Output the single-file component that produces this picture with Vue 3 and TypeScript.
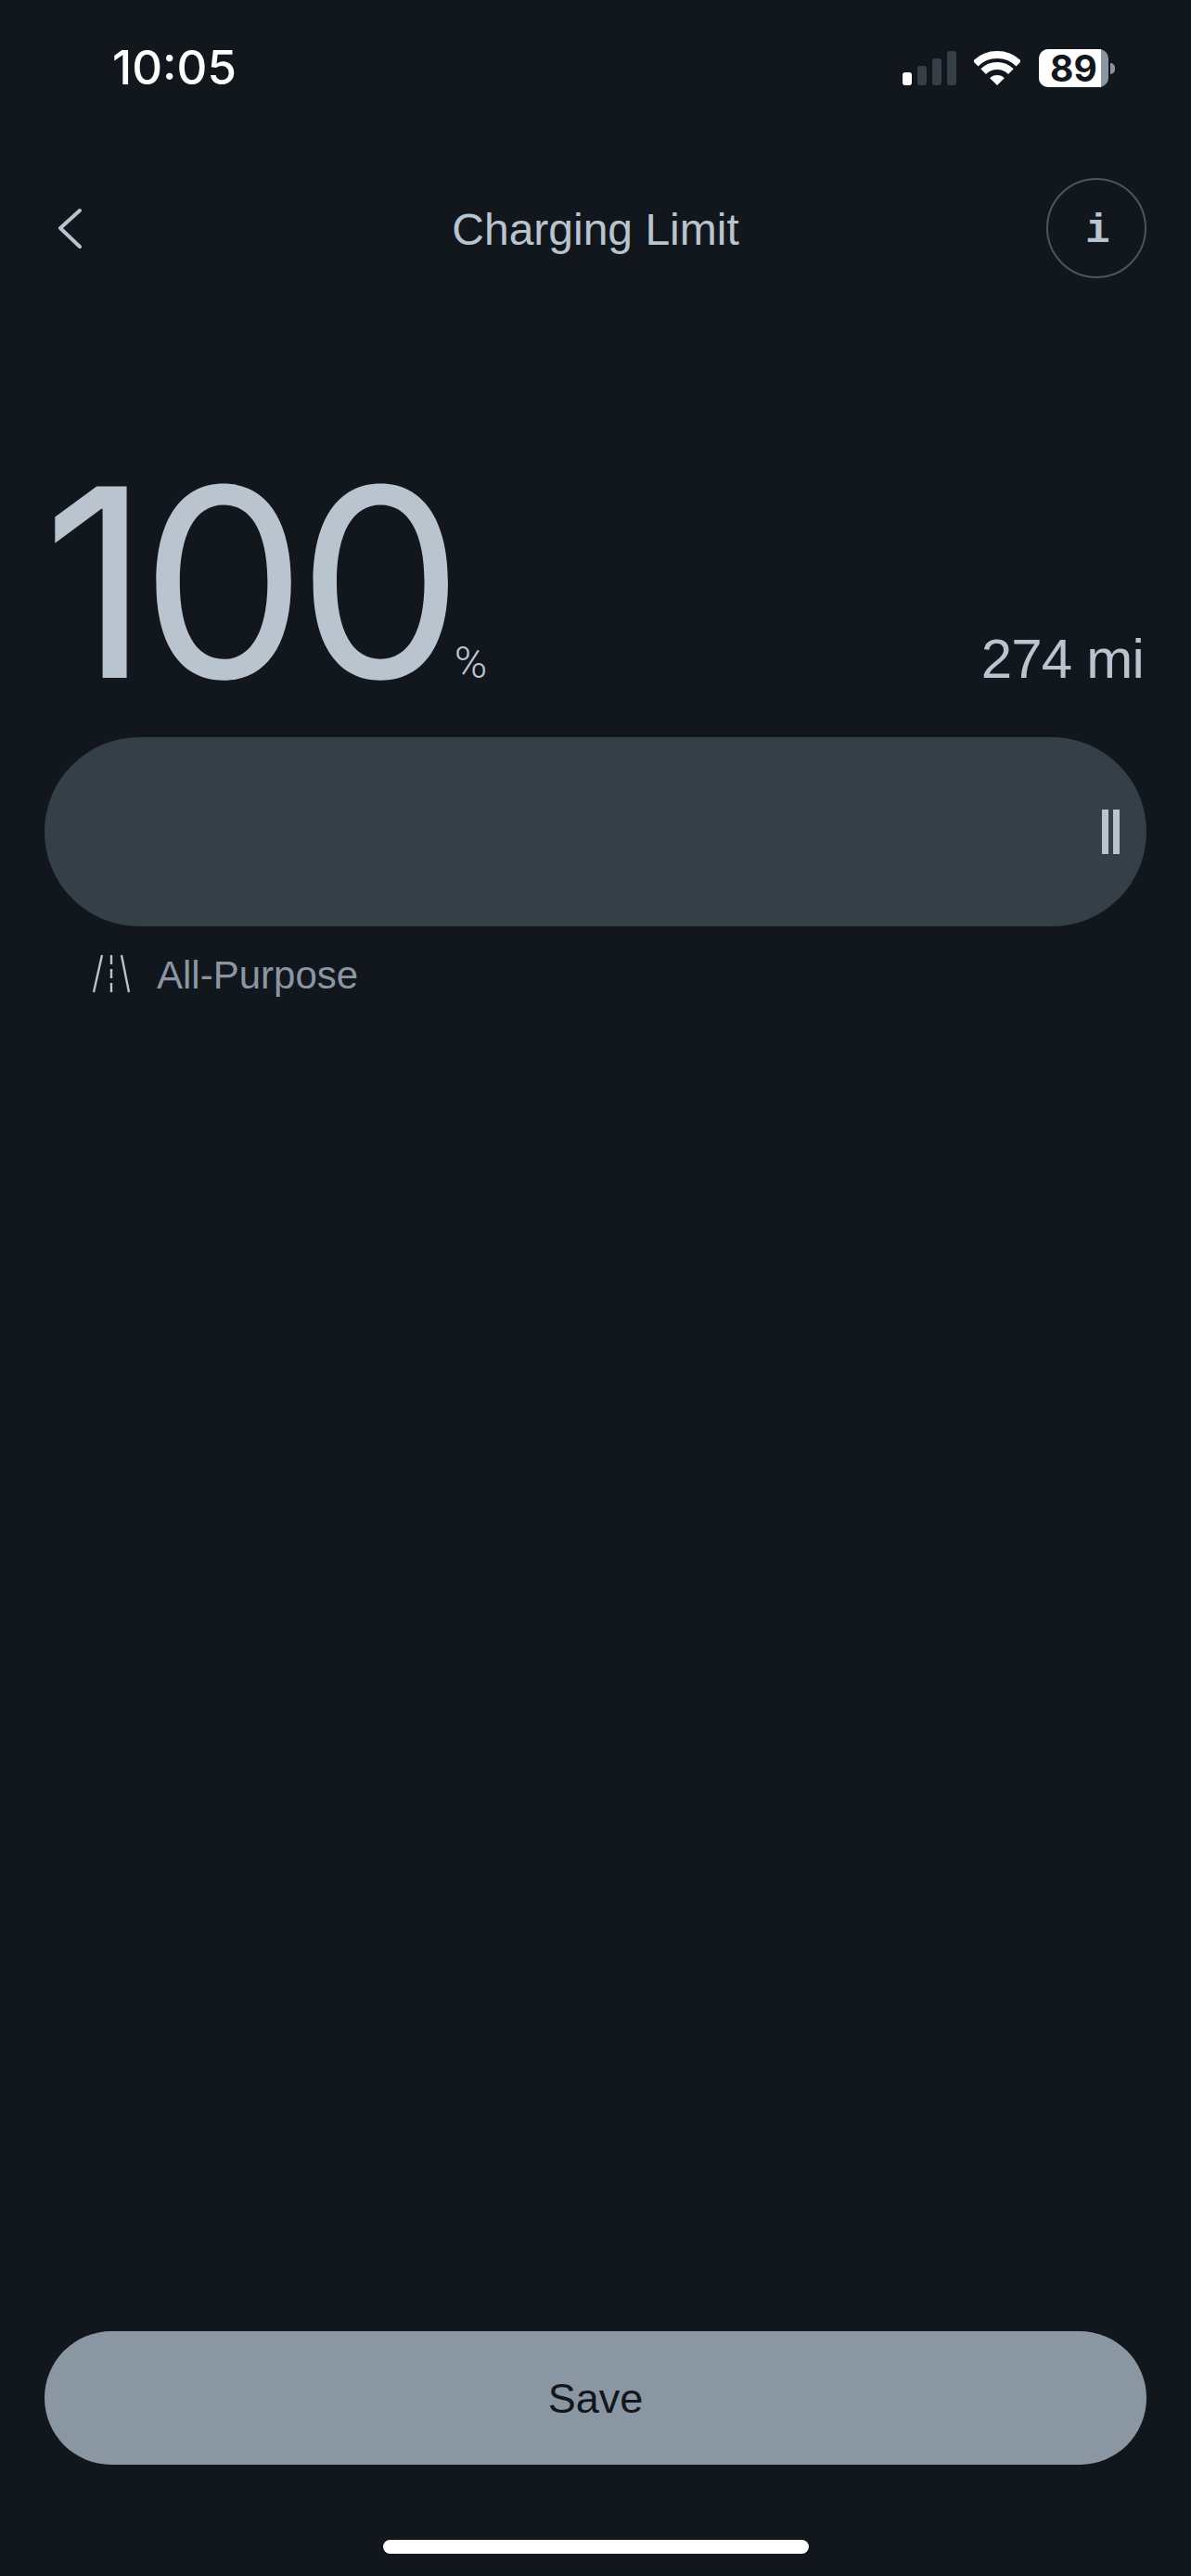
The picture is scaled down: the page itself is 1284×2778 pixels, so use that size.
<script setup lang="ts">
const signalBars = [14, 21, 29, 37];
const activeBars = 1;
const batteryLevel = 89;
</script>

<template>
  <div class="screen">
    <header class="status-bar">
      <span class="time">10:05</span>
      <div class="status-icons">
        <div class="signal">
          <i
            v-for="(h, idx) in signalBars"
            :key="h"
            :class="{ on: idx < activeBars }"
            :style="{ height: h + 'px' }"
          ></i>
        </div>
        <svg class="wifi" width="50" height="37" viewBox="0 0 50 37">
          <path d="M1.7 13.7A33 33 0 0 1 48.3 13.7" fill="none" stroke="#fff" stroke-width="8" />
          <path d="M10.15 22.15A21 21 0 0 1 39.85 22.15" fill="none" stroke="#fff" stroke-width="8" />
          <path d="M25 37L17.2 29.2A11 11 0 0 1 32.8 29.2Z" fill="#fff" />
        </svg>
        <div class="battery">
          <div class="battery-body">
            <div class="battery-fill" :style="{ width: batteryLevel + '%' }"></div>
            <span class="battery-text">{{ batteryLevel }}</span>
          </div>
          <div class="battery-nub"></div>
        </div>
      </div>
    </header>

    <nav class="nav">
      <button class="back" aria-label="Back">
        <svg width="26" height="44" viewBox="0 0 26 44">
          <path d="M24 3L3 22L24 42" fill="none" stroke="#b9c4cf" stroke-width="4" stroke-linecap="round" stroke-linejoin="round" />
        </svg>
      </button>
      <h1 class="title">Charging Limit</h1>
      <button class="info">i</button>
    </nav>

    <section class="readout">
      <div class="percent">
        <span class="percent-value">100</span>
        <span class="percent-sign">%</span>
      </div>
      <span class="range">274 mi</span>
    </section>

    <div class="slider">
      <div class="grip"><i></i><i></i></div>
    </div>

    <div class="mode">
      <svg width="40" height="42" viewBox="0 0 40 42">
        <g fill="none" stroke="#b9c4cf" stroke-width="2.4">
          <path d="M10 1L1 41" />
          <path d="M20 1V11M20 16V26M20 31V41" />
          <path d="M31 1L39 41" />
        </g>
      </svg>
      <span class="mode-label">All-Purpose</span>
    </div>

    <div class="spacer"></div>

    <button class="save">Save</button>
    <div class="home-indicator"></div>
  </div>
</template>

<style>
html,
body {
  margin: 0;
  background: #12171e;
}
</style>

<style scoped>
.screen {
  width: 1284px;
  height: 2778px;
  display: flex;
  flex-direction: column;
  background: #12171e;
  font-family: "Liberation Sans", Arial, sans-serif;
  color: #b9c4cf;
  overflow: hidden;
}

.status-bar {
  height: 144px;
  box-sizing: border-box;
  display: flex;
  justify-content: space-between;
  align-items: flex-start;
  padding: 52px 82px 0 121px;
}

.time {
  font-family: Inter, sans-serif;
  font-size: 51px;
  line-height: 42px;
  font-weight: 500;
  color: #fff;
}

.status-icons {
  display: flex;
  align-items: flex-end;
  height: 40px;
}

.signal {
  display: flex;
  align-items: flex-end;
  gap: 6px;
  margin-right: 19px;
}

.signal i {
  display: block;
  width: 10px;
  border-radius: 3px;
  background: #353f47;
}

.signal i.on {
  background: #fff;
}

.wifi {
  margin-right: 20px;
}

.battery {
  display: flex;
  align-items: center;
  margin-bottom: -2px;
}

.battery-body {
  position: relative;
  width: 75px;
  height: 41px;
  border-radius: 10px;
  background: #8a96a2;
}

.battery-fill {
  height: 100%;
  border-radius: 10px 0 0 10px;
  background: #fff;
}

.battery-text {
  position: absolute;
  left: 12px;
  top: 0;
  font-family: Inter, sans-serif;
  font-size: 39px;
  line-height: 41px;
  font-weight: 700;
  color: #12171e;
}

.battery-nub {
  width: 5px;
  height: 12px;
  margin-left: 2px;
  background: #8a96a2;
  border-radius: 0 6px 6px 0;
}

.nav {
  height: 108px;
  margin-top: 48px;
  padding: 0 48px 0 62px;
  display: flex;
  align-items: center;
  justify-content: space-between;
}

button {
  font-family: inherit;
  padding: 0;
  border: none;
  background: none;
  cursor: pointer;
}

.back {
  width: 94px;
  height: 44px;
  display: flex;
  align-items: center;
}

.title {
  margin: 0;
  padding-top: 3px;
  font-size: 48px;
  font-weight: 400;
  color: #b9c4cf;
}

.info {
  width: 108px;
  height: 108px;
  box-sizing: border-box;
  padding: 5px 0 0 3px;
  border: 2px solid #4b555e;
  border-radius: 50%;
  font-family: "Liberation Mono", monospace;
  font-size: 44px;
  font-weight: 700;
  color: #b9c4cf;
}

.readout {
  height: 240px;
  margin-top: 208px;
  padding: 0 51px 0 46px;
  display: flex;
  justify-content: space-between;
  align-items: baseline;
}

.percent {
  display: flex;
  align-items: baseline;
}

.percent-value {
  font-family: Inter, sans-serif;
  font-size: 284px;
  line-height: 240px;
  font-weight: 400;
  letter-spacing: -10px;
}

.percent-sign {
  margin-left: 0;
  font-family: Roboto, sans-serif;
  font-size: 48px;
  line-height: 48px;
  font-weight: 300;
}

.range {
  font-size: 60px;
  line-height: 60px;
  letter-spacing: -0.8px;
}

.slider {
  height: 204px;
  margin: 47px 48px 0;
  border-radius: 102px;
  background: #353f47;
  display: flex;
  align-items: center;
  justify-content: flex-end;
  padding-right: 29px;
}

.grip {
  display: flex;
  gap: 5px;
}

.grip i {
  display: block;
  width: 7px;
  height: 48px;
  background: #b9c4cf;
}

.mode {
  margin: 30px 0 0 100px;
  height: 42px;
  display: flex;
  align-items: center;
  gap: 29px;
}

.mode-label {
  padding-top: 3px;
  font-size: 42px;
  color: #8a96a2;
}

.spacer {
  flex: 1;
}

.save {
  height: 144px;
  margin: 0 48px;
  padding-top: 2px;
  border-radius: 72px;
  background: #8a96a2;
  font-size: 45px;
  color: #12171e;
}

.home-indicator {
  width: 459px;
  height: 15px;
  margin: 81px auto 24px;
  border-radius: 8px;
  background: #fff;
}
</style>
